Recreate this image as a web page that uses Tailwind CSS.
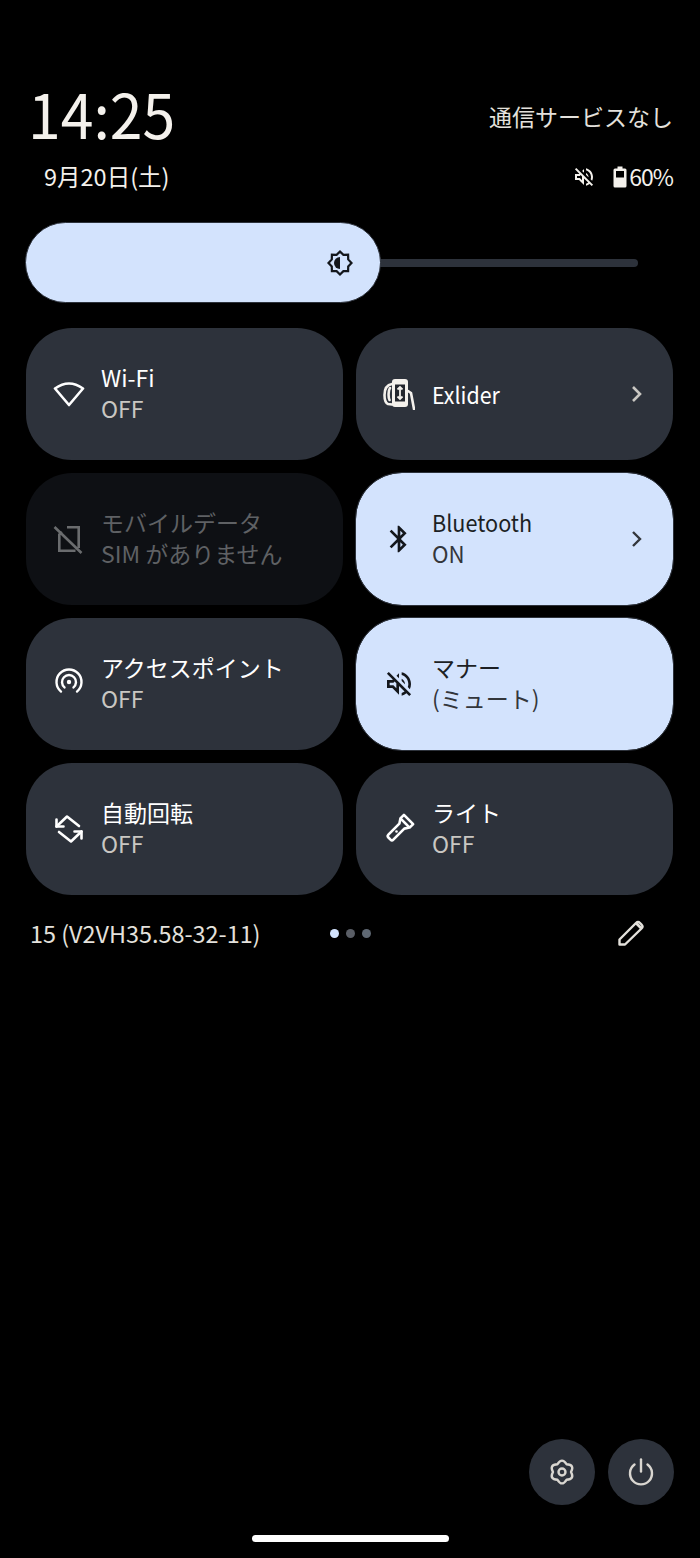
<!DOCTYPE html>
<html lang="ja"><head><meta charset="utf-8">
<script src="https://cdn.jsdelivr.net/npm/@tailwindcss/browser@4"></script>
</head>
<body class="bg-black">
<div class="flex flex-col w-[700px] h-[1558px] bg-black overflow-hidden font-['Noto_Sans_CJK_JP',sans-serif] text-[#f4f1ec]">
  <!-- header -->
  <div class="h-[82px] shrink-0"></div>
  <div class="flex justify-between items-center h-[66px] pl-[28px] pr-[27px]">
    <span class="text-[62px] leading-[66px] scale-x-[0.95] origin-left -mt-[7px]">14:25</span>
    <span class="text-[23px] leading-[31px] text-[#e4e1dc] mt-[2px]">通信サービスなし</span>
  </div>
  <div class="flex justify-between items-center h-[31px] mt-[13px] pl-[44px] pr-[27px]">
    <span class="text-[23.500px] leading-[31px]">9月20日(土)</span>
    <div class="flex items-center">
      <svg class="w-[24px] h-[24px] mr-[17px]" viewBox="0 0 24 24" fill="#f4f1ec"><path d="M4.340 2.930L2.930 4.340 7.290 8.700 7 9H3v6h4l5 5v-6.590l4.180 4.180c-.65.490-1.380.880-2.180 1.110v2.060c1.340-.300 2.570-.920 3.610-1.750l2.050 2.050 1.410-1.410L4.340 2.930zM10 15.170L7.830 13H5v-2h2.830l.880-.880L10 11.410v3.760zM19 12c0 .820-.150 1.610-.410 2.340l1.530 1.530c.560-1.170.880-2.480.880-3.870 0-4.280-2.990-7.860-7-8.770v2.060c2.890.860 5 3.540 5 6.710zm-7-8l-1.880 1.880L12 7.760zm4.500 8c0-1.770-1.020-3.290-2.500-4.030v1.790l2.480 2.480c.010-.080.020-.160.020-.240z"/></svg>
      <svg class="w-[14px] h-[24px]" viewBox="0 0 14 24"><path fill="#f4f1ec" fill-rule="evenodd" d="M4.500 1.500h5v2h2.500a1.500 1.500 0 0 1 1.500 1.500v16a1.500 1.500 0 0 1-1.500 1.500H2A1.500 1.500 0 0 1 .5 21V5A1.500 1.500 0 0 1 2 3.500h2.500zM3 6v6.500h8V6z"/></svg>
      <span class="text-[23px] leading-[31px] ml-[2px] tracking-[-1px]">60%</span>
    </div>
  </div>
  <!-- slider -->
  <div class="flex items-center mt-[30px] ml-[25px] h-[81px]">
    <div class="relative z-10 w-[356px] h-[81px] rounded-full bg-[#d3e3fd] border border-[#2d323b] flex items-center justify-end pr-[26px]">
      <svg class="w-[28px] h-[28px]" viewBox="0 0 28 28"><path fill="none" stroke="#14171c" stroke-width="2.200" stroke-linejoin="miter" d="M14 2.500l3.400 3.300 4.700-.1.1 4.700L25.500 14l-3.300 3.500-.1 4.700-4.700-.1-3.400 3.400-3.400-3.400-4.700.1-.1-4.700L2.500 14l3.300-3.600.1-4.700 4.700.1z"/><path fill="#14171c" d="M14 8v12a6 6 0 0 1 0-12z"/></svg>
    </div>
    <div class="w-[259px] h-[8px] -ml-[2px] rounded-r-full bg-[#2d323b]"></div>
  </div>
  <!-- tiles -->
  <div class="grid grid-cols-[317px_317px] auto-rows-[132px] gap-[13px] ml-[26px] mt-[25px]">
    <div class="rounded-[46px] bg-[#2d323b] flex items-center pl-[27px]">
      <svg class="w-[32px] h-[32px] mr-[16px]" viewBox="0 0 32 32"><path fill="none" stroke="#fff" stroke-width="2.600" stroke-linejoin="round" d="M16 27L2 10.500Q16 .5 30 10.500Z"/></svg>
      <div class="text-[23px] leading-[31px] -mt-[2px]"><div class="text-white">Wi-Fi</div><div class="text-[#c9c7c2]">OFF</div></div>
    </div>
    <div class="rounded-[46px] bg-[#2d323b] flex items-center pl-[27px] pr-[30px]">
      <svg class="w-[32px] h-[32px] mr-[17px]" viewBox="0 0 32 32"><rect x="9" y="1" width="16" height="28" rx="3" fill="#f4f1ec"/><rect x="12" y="6.500" width="10" height="17" fill="#23262d"/><path fill="none" stroke="#f4f1ec" stroke-width="1.800" d="M17 9.500v11M14.500 11.500l2.500-2.500 2.500 2.500M14.500 18.500l2.500 2.500 2.500-2.500"/><path fill="none" stroke="#f4f1ec" stroke-width="2.600" stroke-linecap="round" stroke-linejoin="round" d="M9 6C3 7 1.500 12 1.500 17c0 5 1 8 3.500 9l4 .5M7 10c-1.500 2-2 9-.5 12M25 13l3 2 3 16"/></svg>
      <div class="flex-1 text-[23px] leading-[31px] text-white scale-x-[0.93] origin-left">Exlider</div>
      <svg class="w-[12px] h-[18px]" viewBox="0 0 12 18"><path fill="none" stroke="#c9c7c2" stroke-width="2.600" d="M2 2l7 7-7 7"/></svg>
    </div>
    <div class="rounded-[46px] bg-[#0e1014] flex items-center pl-[27px] text-[#5f6164]">
      <svg class="w-[32px] h-[32px] mr-[16px]" viewBox="0 0 32 32"><path fill="none" stroke="#6a6c6e" stroke-width="2.600" d="M14 4.300H25.700V25M22.500 27.700H6.300V11.500L9 9M1.500 4l27 26"/></svg>
      <div class="text-[23px] leading-[31px] -mt-[2px]"><div>モバイルデータ</div><div>SIM がありません</div></div>
    </div>
    <div class="rounded-[46px] bg-[#d3e3fd] outline-1 outline-[#2d323b] flex items-center pl-[27px] pr-[30px] text-[#1c1f24]">
      <svg class="w-[32px] h-[32px] mr-[17px]" viewBox="0 0 24 24" fill="#14171c"><path d="M17.710 7.710L12 2h-1v7.590L6.410 5 5 6.410 10.590 12 5 17.590 6.410 19 11 14.410V22h1l5.710-5.710-4.300-4.290 4.300-4.290zM13 5.830l1.880 1.880L13 9.590V5.830zm1.880 10.460L13 18.170v-3.760l1.880 1.880z"/></svg>
      <div class="flex-1 text-[23px] leading-[31px] -mt-[2px]"><div class="scale-x-[0.94] origin-left">Bluetooth</div><div class="text-[#33363b] scale-x-[0.97] origin-left">ON</div></div>
      <svg class="w-[12px] h-[18px]" viewBox="0 0 12 18"><path fill="none" stroke="#33363b" stroke-width="2.400" d="M2 2l7 7-7 7"/></svg>
    </div>
    <div class="rounded-[46px] bg-[#2d323b] flex items-center pl-[27px]">
      <svg class="w-[32px] h-[32px] mr-[16px]" viewBox="0 0 32 32"><g fill="none" stroke="#fff" stroke-width="2.400" stroke-linecap="round"><path d="M8 23.600A12.500 12.500 0 1 1 24 23.600"/><path d="M11.500 19.400A7 7 0 1 1 20.500 19.400"/></g><circle cx="16" cy="14" r="2.200" fill="#fff"/></svg>
      <div class="text-[23px] leading-[31px] -mt-[2px]"><div class="text-white">アクセスポイント</div><div class="text-[#c9c7c2]">OFF</div></div>
    </div>
    <div class="rounded-[46px] bg-[#d3e3fd] outline-1 outline-[#2d323b] flex items-center pl-[27px] text-[#1c1f24]">
      <svg class="w-[32px] h-[32px] mr-[17px]" viewBox="0 0 24 24" fill="#14171c"><path d="M4.340 2.930L2.930 4.340 7.290 8.700 7 9H3v6h4l5 5v-6.590l4.180 4.180c-.65.490-1.380.880-2.180 1.110v2.060c1.340-.300 2.570-.920 3.610-1.750l2.050 2.050 1.410-1.410L4.340 2.930zM10 15.170L7.830 13H5v-2h2.830l.880-.880L10 11.410v3.760zM19 12c0 .820-.150 1.610-.410 2.340l1.530 1.530c.560-1.170.880-2.480.880-3.870 0-4.280-2.990-7.860-7-8.770v2.060c2.890.860 5 3.540 5 6.710zm-7-8l-1.880 1.880L12 7.760zm4.500 8c0-1.770-1.020-3.290-2.500-4.030v1.790l2.480 2.480c.010-.080.020-.160.020-.240z"/></svg>
      <div class="text-[23px] leading-[31px] -mt-[2px]"><div>マナー</div><div class="text-[#33363b]">(ミュート)</div></div>
    </div>
    <div class="rounded-[46px] bg-[#2d323b] flex items-center pl-[27px]">
      <svg class="w-[32px] h-[32px] mr-[16px]" viewBox="0 0 32 32"><g fill="none" stroke="#fff" stroke-width="2.600" stroke-linecap="round" stroke-linejoin="round"><path d="M3.500 6.500V13.500H10.500"/><path d="M3.500 13.500L14 3.500 26 13"/><path d="M28.500 25.500V18.500H21.500"/><path d="M28.500 18.500L18 28.500 6 19"/></g></svg>
      <div class="text-[23px] leading-[31px] -mt-[2px]"><div class="text-white">自動回転</div><div class="text-[#c9c7c2]">OFF</div></div>
    </div>
    <div class="rounded-[46px] bg-[#2d323b] flex items-center pl-[27px]">
      <svg class="w-[32px] h-[32px] mr-[17px]" viewBox="0 0 32 32"><g transform="rotate(45 16 16)" fill="none" stroke="#fff" stroke-width="2.600" stroke-linejoin="round"><path d="M9.500 2.500h13v5l-3 4.500v15.500a2 2 0 0 1-2 2h-3a2 2 0 0 1-2-2V12l-3-4.500z"/><path d="M9.500 7.500h13"/></g><circle cx="13.500" cy="18.500" r="1.300" fill="#fff"/></svg>
      <div class="text-[23px] leading-[31px] -mt-[2px]"><div class="text-white">ライト</div><div class="text-[#c9c7c2]">OFF</div></div>
    </div>
  </div>
  <!-- footer -->
  <div class="flex items-center h-[30px] mt-[23px] pl-[30px] pr-[56px]">
    <span class="w-[300px] text-[23.400px] leading-[30px] text-[#e4e1dc] whitespace-nowrap">15 (V2VH35.58-32-11)</span>
    <div class="flex items-center gap-[7px]">
      <span class="w-[9px] h-[9px] rounded-full bg-[#d3e3fd]"></span>
      <span class="w-[9px] h-[9px] rounded-full bg-[#5a5e66]"></span>
      <span class="w-[9px] h-[9px] rounded-full bg-[#5f6873]"></span>
    </div>
    <svg class="ml-auto w-[26px] h-[26px]" viewBox="0 0 26 26"><path fill="none" stroke="#e4e1dc" stroke-width="2.400" stroke-linejoin="round" d="M1.500 24.500v-5L18 3q2-2 4 0l1.500 1.500q2 2 0 4L7 24.500z"/><path fill="#e4e1dc" d="M17 4l2-2 5 5-2 2z"/></svg>
  </div>
  <!-- bottom buttons -->
  <div class="mt-auto flex justify-end gap-[13px] pr-[26px]">
    <div class="w-[66px] h-[66px] rounded-full bg-[#2d323b] flex items-center justify-center">
      <svg class="w-[28px] h-[28px]" viewBox="-14 -14 28 28"><g fill="none" stroke="#d9d6d0" stroke-width="2.400" stroke-linejoin="round"><path d="M4.500 -7.800Q13 -7.500 9 0Q13 7.500 4.500 7.800Q0 15 -4.500 7.800Q-13 7.500 -9 0Q-13 -7.500 -4.500 -7.800Q0 -15 4.500 -7.800Z"/><circle r="3.500"/></g></svg>
    </div>
    <div class="w-[66px] h-[66px] rounded-full bg-[#2d323b] flex items-center justify-center">
      <svg class="w-[28px] h-[28px]" viewBox="0 0 28 28"><g fill="none" stroke="#d9d6d0" stroke-width="2.400" stroke-linecap="round"><path d="M14 1.500v12"/><path d="M7.500 6.500A11 11 0 1 0 20.500 6.500"/></g></svg>
    </div>
  </div>
  <div class="w-[197px] h-[7px] rounded-full bg-white mx-auto mt-[30px] mb-[16px]"></div>
</div>
</body></html>
